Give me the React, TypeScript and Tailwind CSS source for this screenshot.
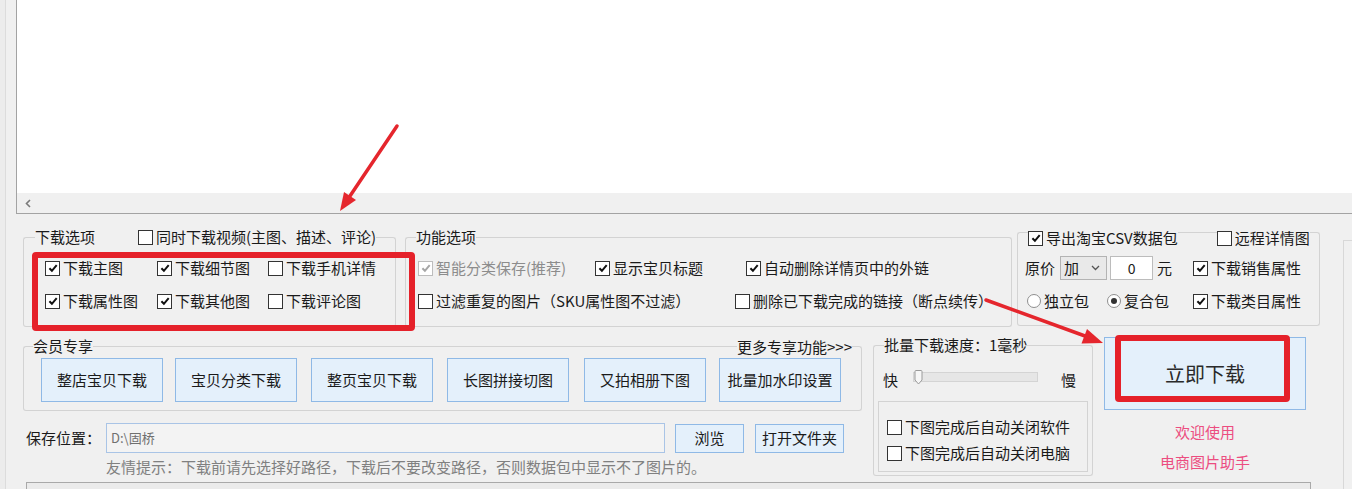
import React from 'react';

const LINE = 'border-[#d3d3d3]';

type CheckProps = { label: string; checked?: boolean; disabled?: boolean; className?: string };

const Check: React.FC<CheckProps> = ({ label, checked, disabled, className }) => (
  <div className={`flex items-center shrink-0 ${className ?? 'h-[24px]'}`}>
    <span
      className={`w-[15px] h-[15px] border bg-white flex items-center justify-center shrink-0 ${
        disabled ? 'border-[#bdbdbd]' : 'border-[#333333]'
      }`}
    >
      {checked && (
        <svg viewBox="0 0 10 10" className="w-[10px] h-[10px]">
          <path d="M1.4 5.3 L3.9 7.8 L8.7 2.1" fill="none" stroke={disabled ? '#a6a6a6' : '#111111'} strokeWidth="2" />
        </svg>
      )}
    </span>
    <span className={`ml-[3px] whitespace-nowrap ${disabled ? 'text-[#8c8c8c]' : ''}`}>{label}</span>
  </div>
);

const Radio: React.FC<{ label: string; checked?: boolean; className?: string }> = ({ label, checked, className }) => (
  <div className={`flex items-center h-[24px] shrink-0 ${className ?? ''}`}>
    <span className="w-[14px] h-[14px] rounded-full border border-[#8f8f8f] bg-white flex items-center justify-center">
      {checked && <span className="w-[6px] h-[6px] rounded-full bg-[#333333]" />}
    </span>
    <span className="ml-[3px] whitespace-nowrap">{label}</span>
  </div>
);

const Btn: React.FC<{ children: React.ReactNode; className?: string }> = ({ children, className }) => (
  <button className={`shrink-0 border border-[#8fb9e6] bg-[#e4f0fb] text-[#1a1a1a] flex items-center justify-center ${className ?? ''}`}>
    {children}
  </button>
);

type GroupProps = {
  corner: string;
  lineTop: string;
  head: React.ReactNode;
  tail?: string;
  className?: string;
  bodyClass?: string;
  children: React.ReactNode;
};

// windows style group box, label sits on the top border
const GroupBox: React.FC<GroupProps> = ({ corner, lineTop, head, tail, className, bodyClass, children }) => (
  <div className={`flex flex-col shrink-0 ${className ?? ''}`}>
    <div className="flex h-[20px]">
      <div className={`${corner} ${lineTop} border-t border-l ${LINE} rounded-tl-[3px] shrink-0`} />
      {head}
      <div className={`${tail ?? 'flex-1'} ${lineTop} border-t border-r ${LINE} rounded-tr-[3px] shrink-0`} />
    </div>
    <div className={`border-l border-r border-b ${LINE} rounded-b-[3px] ${bodyClass ?? ''}`}>{children}</div>
  </div>
);

const Slider: React.FC = () => (
  <div className="relative self-start mt-[2px] ml-[15px] w-[125px] h-[10px] bg-[#e6e6e6] border border-[#d4d4d4]">
    <svg viewBox="0 0 9 15" className="absolute left-0 top-[-3px] w-[9px] h-[15px]">
      <path d="M1 1.5 Q1 .5 2 .5 H7 Q8 .5 8 1.5 V10 L4.5 14 L1 10 Z" fill="#f6f6f6" stroke="#9a9a9a" strokeWidth="1" />
    </svg>
  </div>
);

export default function App() {
  const vipButtons = [
    { name: '整店宝贝下载', ml: '' },
    { name: '宝贝分类下载', ml: 'ml-[12px]' },
    { name: '整页宝贝下载', ml: 'ml-[14px]' },
    { name: '长图拼接切图', ml: 'ml-[14px]' },
    { name: '又拍相册下图', ml: 'ml-[15px]' },
    { name: '批量加水印设置', ml: 'ml-[13px]' },
  ];

  return (
    <div className="relative w-[1352px] h-[489px] overflow-hidden bg-[#f0f0f0] text-[15px] text-[#1a1a1a] font-['Noto_Sans_CJK_SC','Liberation_Sans',sans-serif] flex">
      {/* window edge */}
      <div className="w-[6px] shrink-0 border-r border-[#dcdcdc] bg-[#ececec]" />

      <div className="flex-1 flex flex-col min-w-0">
        {/* result list */}
        <div className="ml-[10px] h-[214px] shrink-0 border-l border-b border-[#a3a3a3] flex flex-col">
          <div className="h-[193px] bg-white" />
          <div className="h-[20px] flex items-center pl-[8px]">
            <svg viewBox="0 0 6 9" className="w-[6px] h-[9px]">
              <path d="M5 1 L1.5 4.5 L5 8" fill="none" stroke="#7a7a7a" strokeWidth="1.6" />
            </svg>
          </div>
        </div>

        <div className="flex-1 flex">
          <div className="flex-1 flex flex-col">
            {/* options row */}
            <div className="flex items-start pl-[17px] pt-[13px]">
              <GroupBox
                corner="w-[12px]"
                lineTop="mt-[10px]"
                className="w-[373px]"
                bodyClass="pl-[21px] pt-[9px] pb-[13px] flex flex-col gap-[9px]"
                head={
                  <div className="flex items-center">
                    <span className="leading-[20px]">下载选项</span>
                    <Check className="h-[20px] ml-[43px]" label="同时下载视频(主图、描述、评论)" />
                  </div>
                }
              >
                <div className="flex">
                  <Check className="h-[24px] w-[112px]" checked label="下载主图" />
                  <Check className="h-[24px] w-[111px]" checked label="下载细节图" />
                  <Check label="下载手机详情" />
                </div>
                <div className="flex">
                  <Check className="h-[24px] w-[112px]" checked label="下载属性图" />
                  <Check className="h-[24px] w-[111px]" checked label="下载其他图" />
                  <Check label="下载评论图" />
                </div>
              </GroupBox>

              <GroupBox
                corner="w-[11px]"
                lineTop="mt-[10px]"
                className="ml-[9px] w-[607px]"
                bodyClass="pl-[12px] pt-[9px] pb-[13px] flex flex-col gap-[9px]"
                head={<span className="leading-[20px]">功能选项</span>}
              >
                <div className="flex">
                  <Check className="h-[24px] w-[177px]" checked disabled label="智能分类保存(推荐)" />
                  <Check className="h-[24px] w-[151px]" checked label="显示宝贝标题" />
                  <Check checked label="自动删除详情页中的外链" />
                </div>
                <div className="flex">
                  <Check className="h-[24px] w-[317px]" label="过滤重复的图片（SKU属性图不过滤）" />
                  <Check label="删除已下载完成的链接（断点续传）" />
                </div>
              </GroupBox>

              <GroupBox
                corner="w-[11px]"
                lineTop="mt-[4px]"
                className="ml-[5px] mt-[1px] w-[303px]"
                bodyClass="pl-[7px] pt-[8px] pb-[12px] flex flex-col gap-[9px]"
                head={
                  <div className="flex">
                    <Check className="h-[20px]" checked label="导出淘宝CSV数据包" />
                    <div className={`w-[39px] mt-[4px] border-t ${LINE}`} />
                    <Check className="h-[20px]" label="远程详情图" />
                  </div>
                }
              >
                <div className="flex items-center h-[24px]">
                  <span>原价</span>
                  <div className="ml-[5px] w-[47px] h-[24px] border border-[#b3b3b3] bg-[#e9e9e9] flex items-center pl-[3px]">
                    <span>加</span>
                    <svg viewBox="0 0 9 6" className="ml-[12px] w-[9px] h-[6px]">
                      <path d="M1 1 L4.5 4.5 L8 1" fill="none" stroke="#555555" strokeWidth="1.3" />
                    </svg>
                  </div>
                  <div className="ml-[3px] w-[43px] h-[24px] border border-[#bcbcbc] bg-white flex items-center justify-center text-[14px]">0</div>
                  <span className="ml-[4px]">元</span>
                  <Check className="h-[24px] ml-[21px]" checked label="下载销售属性" />
                </div>
                <div className="flex items-center h-[24px] pl-[2px]">
                  <Radio label="独立包" />
                  <Radio className="ml-[18px]" checked label="复合包" />
                  <Check className="h-[24px] ml-[24px]" checked label="下载类目属性" />
                </div>
              </GroupBox>
            </div>

            {/* second row */}
            <div className="flex items-start pl-[17px]">
              <div className="w-[839px] mt-[9px] flex flex-col shrink-0">
                <GroupBox
                  corner="w-[10px]"
                  lineTop="mt-[10px]"
                  tail="w-[10px]"
                  className="w-[839px]"
                  bodyClass="pl-[17px] pt-[2px] pb-[8px] flex"
                  head={
                    <>
                      <span className="leading-[20px]">会员专享</span>
                      <div className={`flex-1 mt-[10px] border-t ${LINE}`} />
                      <span className="leading-[22px]">更多专享功能&gt;&gt;&gt;</span>
                    </>
                  }
                >
                  {vipButtons.map((b) => (
                    <Btn key={b.name} className={`w-[122px] h-[44px] ${b.ml}`}>
                      {b.name}
                    </Btn>
                  ))}
                </GroupBox>

                <div className="flex items-center mt-[12px] h-[30px] pl-[3px]">
                  <span className="w-[80px] shrink-0">保存位置：</span>
                  <div className="w-[559px] h-[30px] shrink-0 border border-[#a9c4e6] bg-[#f3f3f3] flex items-center pl-[4px] text-[13px] text-[#707070]">
                    {'D:\\固桥'}
                  </div>
                  <Btn className="ml-[10px] w-[69px] h-[29px]">浏览</Btn>
                  <Btn className="ml-[11px] w-[89px] h-[29px]">打开文件夹</Btn>
                </div>
                <div className="mt-[5px] pl-[83px] leading-[18px] text-[#808080] whitespace-nowrap">
                  友情提示：下载前请先选择好路径，下载后不要改变路径，否则数据包中显示不了图片的。
                </div>
              </div>

              <GroupBox
                corner="w-[11px]"
                lineTop="mt-[10px]"
                className="ml-[11px] mt-[8px] w-[220px]"
                bodyClass="pb-[3px]"
                head={<span className="leading-[20px]">批量下载速度：1毫秒</span>}
              >
                <div className="flex items-center h-[20px] mt-[15px] pl-[9px]">
                  <span>快</span>
                  <Slider />
                  <span className="ml-[23px]">慢</span>
                </div>
                <div className={`mt-[11px] mx-[4px] border ${LINE} pt-[15px] pb-[8px] pl-[8px] flex flex-col gap-[6px]`}>
                  <Check className="h-[20px]" label="下图完成后自动关闭软件" />
                  <Check className="h-[20px]" label="下图完成后自动关闭电脑" />
                </div>
              </GroupBox>

              <div className="ml-[11px] mt-[10px] w-[202px] flex flex-col items-center shrink-0">
                <Btn className="w-[202px] h-[73px] text-[20px] text-[#2a2a2a]">立即下载</Btn>
                <div className="mt-[7px] leading-[30px] text-center text-[#ec4d80]">
                  <div>欢迎使用</div>
                  <div>电商图片助手</div>
                </div>
              </div>
            </div>

            {/* status strip */}
            <div className="mt-[5px] ml-[20px] w-[1285px] h-[20px] shrink-0 border-t border-l border-r border-[#a9a9a9] bg-[#ebebeb]" />
          </div>

          <div className="w-[9px] mt-[26px] shrink-0 border-l border-t border-[#d8d8d8]" />
        </div>
      </div>

      {/* red annotations */}
      <div className="absolute left-[32px] top-[252px] w-[383px] h-[79px] border-[6px] border-[#e5212a] rounded-[4px] pointer-events-none" />
      <div className="absolute left-[1115px] top-[335px] w-[175px] h-[67px] border-[6px] border-[#e5212a] rounded-[4px] pointer-events-none" />
      <svg className="absolute left-0 top-0 w-[1352px] h-[489px] pointer-events-none" viewBox="0 0 1352 489">
        <line x1="397" y1="126" x2="350" y2="196" stroke="#e5262d" strokeWidth="3.5" strokeLinecap="round" />
        <polygon points="340,211 356,200 344,192" fill="#e5262d" />
        <line x1="986" y1="300" x2="1085" y2="336" stroke="#e5262d" strokeWidth="3.5" strokeLinecap="round" />
        <polygon points="1103,343 1081.5,343.5 1087,329" fill="#e5262d" />
      </svg>
    </div>
  );
}
